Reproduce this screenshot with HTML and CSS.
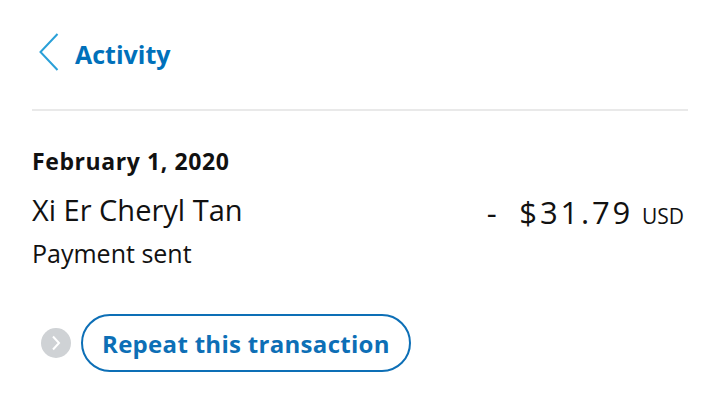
FILE: index.html
```html
<!DOCTYPE html>
<html>
<head>
<meta charset="utf-8">
<link rel="stylesheet" href="styles.css">
</head>
<body>
<div class="page">
  <header class="header">
    <svg class="back" width="20" height="38" viewBox="0 0 20 38"><path d="M18.5 1 L1.5 19 L18.5 37" fill="none" stroke="#2aa0d8" stroke-width="2"/></svg>
    <span class="title">Activity</span>
  </header>
  <div class="divider"></div>
  <section class="txn">
    <div class="date">February 1, 2020</div>
    <div class="row">
      <div class="left">
        <div class="name">Xi Er Cheryl Tan</div>
        <div class="status">Payment sent</div>
      </div>
      <div class="amount"><span class="amt">- $31.79</span><span class="cur">USD</span></div>
    </div>
    <div class="actions">
      <span class="dot"><svg width="30" height="30" viewBox="0 0 30 30"><path d="M12 8.5 L18 15 L12 21.5" fill="none" stroke="#fff" stroke-width="2"/></svg></span>
      <button class="repeat">Repeat this transaction</button>
    </div>
  </section>
</div>
</body>
</html>
```
FILE: styles.css
```css
html, body { margin: 0; padding: 0; background: #fff; }
body { font-family: "Open Sans", "Noto Sans", sans-serif; color: #111; }
.page { padding: 0 32px; }
.header { display: flex; align-items: center; height: 109px; box-sizing: border-box; padding: 0 0 5px 7px; gap: 16px; }
.back { display: block; }
.title { font-size: 25px; font-weight: 700; color: #0070ba; padding-top: 3px; }
.divider { height: 2px; background: #e9e9e9; }
.txn { padding-top: 35px; }
.date { font-size: 23px; font-weight: 700; line-height: 30px; letter-spacing: 0.6px; }
.row { display: flex; justify-content: space-between; align-items: flex-start; margin-top: 16px; }
.name { font-size: 29px; line-height: 36px; }
.status { font-size: 25px; line-height: 30px; margin-top: 10px; }
.amount { display: flex; align-items: baseline; margin-top: 2px; padding-right: 4px; }
.amt { font-size: 31px; line-height: 36px; letter-spacing: 2.8px; word-spacing: 9px; }
.cur { font-size: 21px; margin-left: 9px; }
.actions { display: flex; align-items: center; gap: 10px; margin-top: 46px; padding-left: 9px; }
.dot { width: 30px; height: 30px; border-radius: 50%; background: #cfd2d5; display: block; }
.dot svg { display: block; }
.repeat { font-family: inherit; font-size: 24px; font-weight: 700; letter-spacing: 0.3px; color: #0d6fb6; background: #fff; border: 2px solid #0d6fb6; border-radius: 30px; height: 58px; padding: 0 19px; cursor: pointer; }
```
